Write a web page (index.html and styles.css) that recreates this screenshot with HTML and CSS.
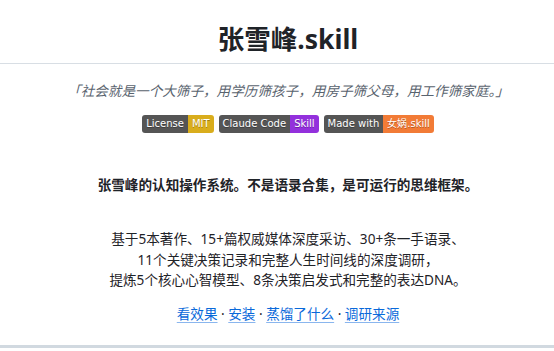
FILE: index.html
```html
<!DOCTYPE html>
<html lang="zh-CN">
<head>
    <meta charset="UTF-8">
    <meta name="viewport" content="width=device-width, initial-scale=1.0">
    <title>张雪峰.skill</title>
    <link rel="stylesheet" href="styles.css">
</head>
<body>

    <div class="readme">

        <h1>张雪峰.skill</h1>

        <!-- Quote -->
        <p class="quote">「社会就是一个大筛子，用学历筛孩子，用房子筛父母，用工作筛家庭。」</p>

        <!-- Badges -->
        <p class="badges">
            <span class="badge"><span class="badge-label">License</span><span class="badge-value yellow">MIT</span></span>
            <span class="badge"><span class="badge-label">Claude Code</span><span class="badge-value purple">Skill</span></span>
            <span class="badge"><span class="badge-label">Made with</span><span class="badge-value orange">女娲.skill</span></span>
        </p>

        <p class="lead"><strong>张雪峰的认知操作系统。不是语录合集，是可运行的思维框架。</strong></p>

        <p class="intro">
            基于5本著作、15+篇权威媒体深度采访、30+条一手语录、<br>
            11个关键决策记录和完整人生时间线的深度调研，<br>
            提炼5个核心心智模型、8条决策启发式和完整的表达DNA。
        </p>

        <p class="links">
            <a href="#demo">看效果</a> · <a href="#install">安装</a> · <a href="#what">蒸馏了什么</a> · <a href="#research">调研来源</a>
        </p>

        <hr>
    </div>

</body>
</html>
```

FILE: styles.css
```css
/* General Styling */
body {
    margin: 0;
    overflow: hidden;
    background: #ffffff;
    color: #1f2328;
    font-family: "Noto Sans", "Noto Sans CJK SC", sans-serif;
    font-size: 13.6px;
    line-height: 20.4px;
}

/* readme is a bit wider than the window, so it is cut on the right */
.readme {
    width: 576px;
    padding: 22px 0 0;
    text-align: center;
}

h1 {
    margin: 0 0 17px;
    padding-bottom: 7px;
    font-size: 26.5px;
    line-height: 34px;
    font-weight: 700;
    border-bottom: 1px solid #d8dee4;
}

p {
    margin: 0 0 13.6px;
}

.quote {
    color: #59636e;
    font-style: italic;
}

/* Badges */
.badges {
    display: flex;
    justify-content: center;
    gap: 5px;
    margin-top: 12px;
    margin-bottom: 42px;
}

.badge {
    display: flex;
    height: 18px;
    border-radius: 3px;
    overflow: hidden;
    font-family: "DejaVu Sans", Verdana, sans-serif;
    font-size: 10px;
    line-height: 18px;
    color: #ffffff;
    text-shadow: 0 1px 0 rgba(1, 1, 1, 0.3);
}

.badge-label,
.badge-value {
    padding: 0 4px;
}

.badge-label {
    background: #555555;
}

.yellow {
    background: #d9ad1c;
}

.purple {
    background: #9330dc;
}

.orange {
    background: #f27b36;
}

.lead {
    margin-bottom: 34px;
}

.links {
    margin-bottom: 0;
}

.links a {
    color: #0969da;
    text-decoration: underline;
    text-decoration-color: #8ab6ee;
    text-underline-offset: 3px;
}

hr {
    height: 3.4px;
    margin: 20px 0 0;
    padding: 0;
    border: 0;
    background: #d1d9e0;
}
```
